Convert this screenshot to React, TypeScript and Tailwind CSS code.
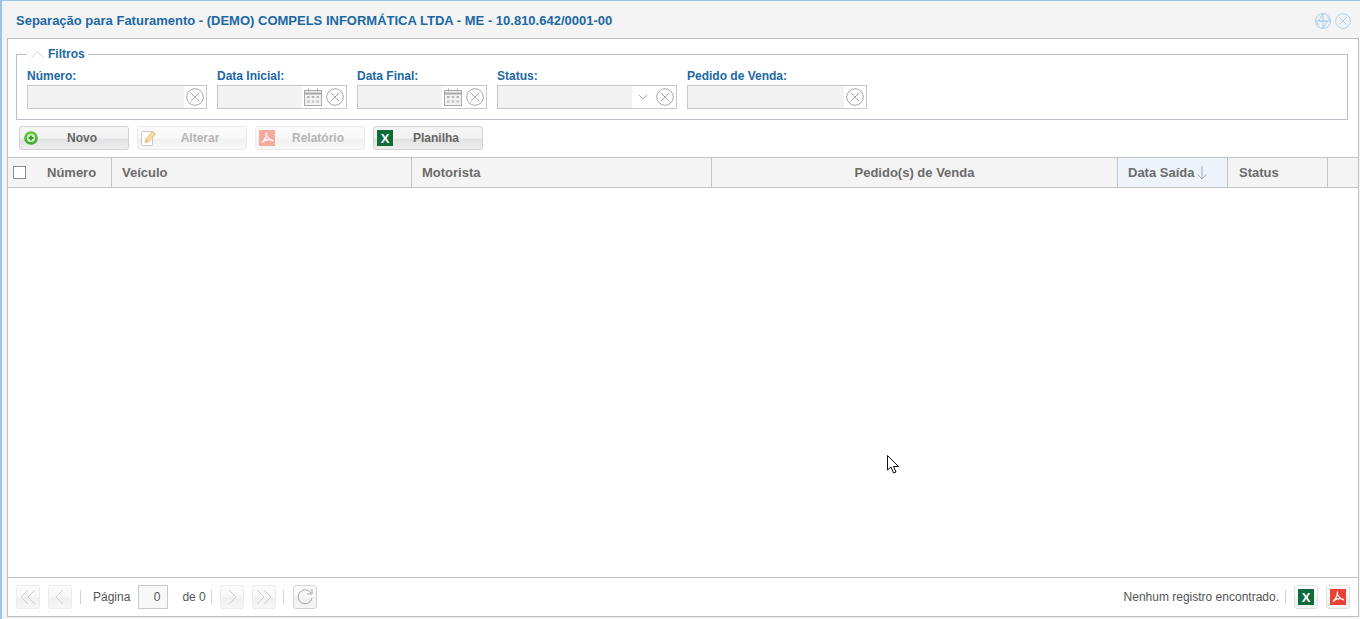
import type { ReactNode } from "react";

const font = "font-['Liberation_Sans',Arial,sans-serif]";

function ClearIcon({ className = "text-[#a9a9a9]" }: { className?: string }) {
  return (
    <svg width="18" height="18" viewBox="0 0 18 18" fill="none" stroke="currentColor" className={className}>
      <circle cx="9" cy="9" r="8.3" />
      <path d="M4.600 4.600l8.800 8.800M13.400 4.600l-8.800 8.800" />
    </svg>
  );
}

function CalendarIcon() {
  return (
    <svg width="18" height="18" viewBox="0 0 18 18" fill="none">
      <rect x="0.500" y="2.500" width="17" height="15" fill="#f2f2f2" stroke="#a9a9a9" />
      <path d="M0.500 5.500h17" stroke="#a9a9a9" strokeWidth="2" />
      <path d="M4.500 0.500v3M13.500 0.500v3" stroke="#a9a9a9" />
      <path d="M3 8.500h2.500M7.800 8.500h2.500M12.500 8.500h2.500M3 9.500h2.500M7.800 9.500h2.500M12.500 9.500h2.500M3 13h2.500M7.800 13h2.500M12.500 13h2.500M3 14h2.500M7.800 14h2.500M12.500 14h2.500" stroke="#b5b5b5" />
    </svg>
  );
}

function PlusBall() {
  return (
    <svg width="14" height="14" viewBox="0 0 14 14">
      <defs>
        <radialGradient id="ball" cx="50%" cy="35%" r="70%">
          <stop offset="0%" stopColor="#86e05a" />
          <stop offset="100%" stopColor="#2f9e1f" />
        </radialGradient>
      </defs>
      <circle cx="7" cy="7" r="6.800" fill="url(#ball)" />
      <circle cx="7" cy="7" r="4" fill="#d9f5cf" />
      <path d="M7 4.600v4.800M4.600 7h4.800" stroke="#2f9e1f" strokeWidth="1.800" />
    </svg>
  );
}

function PencilIcon() {
  return (
    <svg width="16" height="16" viewBox="0 0 16 16" fill="none">
      <rect x="0.500" y="1.500" width="11" height="14" rx="1" fill="#fff" stroke="#c9c9c9" />
      <path d="M4 12.500l1-3.500 6.500-7.500 3 2.500L8 11.500z" fill="#f6dfa5" stroke="#e3bf7c" />
      <path d="M4 12.500l1-3.500 3 2.500z" fill="#f3c48a" />
    </svg>
  );
}

function ExcelIcon() {
  return (
    <span className="flex h-[16px] w-[16px] items-center justify-center bg-[#0f6b3c] text-[13px] leading-none font-bold text-white">
      X
    </span>
  );
}

function PdfIcon({ faded }: { faded?: boolean }) {
  return (
    <svg width="16" height="16" viewBox="0 0 16 16" fill="none">
      <rect width="16" height="16" fill={faded ? "#f7a99e" : "#ea4335"} />
      <path d="M7.500 2.500c.2 3-.8 6.500-4.500 10M7 3.500c.5 3 2.500 6 7 7.500M3 12.500c2.500-3 6.500-3.500 11-2" stroke="#fff" strokeWidth="1.200" />
    </svg>
  );
}

function Field({ label, width, icons }: { label: string; width: string; icons: ReactNode }) {
  return (
    <div className={`flex flex-col ${width}`}>
      <label className="mb-[1px] h-[16px] text-[12px] leading-[16px] font-bold text-[#1c68a4]">{label}</label>
      <div className="flex h-[24px] border border-[#c8c8c8] bg-white">
        <div className="min-w-0 flex-1 bg-[#f3f3f3]" />
        <div className="flex items-center gap-[4px] pr-[2px] pl-[2px]">{icons}</div>
      </div>
    </div>
  );
}

function ToolButton({ icon, label, disabled }: { icon: ReactNode; label: string; disabled?: boolean }) {
  return (
    <button
      className={`flex h-[24px] w-[110px] items-center rounded-[3px] border pl-[3px] text-[12px] font-bold ${
        disabled
          ? "border-[#ececec] bg-[linear-gradient(#fbfbfb_0%,#f9f9f9_50%,#f1f1f1_55%,#f8f8f8_100%)] text-[#b5b5b5]"
          : "border-[#d2d2d2] bg-[linear-gradient(#f6f6f6_0%,#f2f2f2_50%,#e2e2e2_55%,#eeeeee_100%)] text-[#666666]"
      }`}
    >
      <span className="flex w-[16px] items-center justify-center">{icon}</span>
      <span className="flex-1 pr-[3px] text-center">{label}</span>
    </button>
  );
}

function Col({ className, children }: { className: string; children?: ReactNode }) {
  return (
    <div className={`flex h-full items-center border-r border-[#c4c4c4] text-[13px] font-bold text-[#6b6b6b] ${className}`}>{children}</div>
  );
}

function PagerButton({ d, active }: { d: string; active?: boolean }) {
  return (
    <button className={`flex h-[24px] w-[24px] items-center justify-center rounded-[3px] border bg-[linear-gradient(#fbfbfb_0%,#f8f8f8_50%,#f0f0f0_55%,#f6f6f6_100%)] ${active ? "border-[#d2d2d2]" : "border-[#ececec]"}`}>
      <svg width="18" height="18" viewBox="0 0 18 18" fill="none" stroke={active ? "#a3a3a3" : "#d0d0d0"}>
        <path d={d} />
      </svg>
    </button>
  );
}

function Separator() {
  return <span className="h-[14px] w-px bg-[#d4d4d4]" />;
}

function ExportButton({ children }: { children: ReactNode }) {
  return (
    <button className="flex h-[24px] w-[24px] items-center justify-center rounded-[3px] border border-[#e2e2e2] bg-[linear-gradient(#fbfbfb_0%,#f8f8f8_50%,#f0f0f0_55%,#f6f6f6_100%)]">
      {children}
    </button>
  );
}

export default function App() {
  return (
    <div className={`relative flex h-[619px] w-[1360px] flex-col overflow-hidden bg-[#f4f4f4] ${font}`}>
      <div className="flex h-full flex-col border-t border-l-2 border-[#9ac6ec]">
        <header className="flex h-[37px] shrink-0 items-center justify-between pr-[9px] pl-[14px]">
          <h1 className="mt-[2px] text-[13px] font-bold text-[#1c68a4]">
            Separação para Faturamento - (DEMO) COMPELS INFORMÁTICA LTDA - ME - 10.810.642/0001-00
          </h1>
          <div className="mt-[2px] flex items-center gap-[4px] text-[#a6cdec]">
            <svg width="16" height="16" viewBox="0 0 16 16" fill="none" stroke="currentColor">
              <circle cx="8" cy="8" r="7.500" />
              <path d="M8 0.500v7.500H3.500zM8 15.500V8h4.500zM8 8h7.500L12 3.500M8 8H0.500L4 12.500" />
            </svg>
            <ClearIcon className="h-[16px] w-[16px] text-[#a6cdec]" />
          </div>
        </header>

        <main className="mr-[1px] mb-[2px] ml-[5px] flex min-h-0 flex-1 flex-col border border-[#c0c0c0] bg-white">
          <div className="px-[8px] pt-[8px]">
            <fieldset className="h-[73px] w-[1332px] border border-[#b9bcc9] pr-[8px] pl-[10px]">
              <legend className="flex h-[14px] items-center gap-[4px] pr-[3px] pl-[4px] text-[12px] font-bold text-[#1c68a4]">
                <svg width="13" height="7" viewBox="0 0 13 7" fill="none" stroke="#d5d5d5">
                  <path d="M0.500 6.500l6-6 6 6" />
                </svg>
                Filtros
              </legend>
              <div className="mt-[7px] flex gap-[10px]">
                <Field label="Número:" width="w-[180px]" icons={<ClearIcon />} />
                <Field label="Data Inicial:" width="w-[130px]" icons={<><CalendarIcon /><ClearIcon /></>} />
                <Field label="Data Final:" width="w-[130px]" icons={<><CalendarIcon /><ClearIcon /></>} />
                <Field
                  label="Status:"
                  width="w-[180px]"
                  icons={
                    <>
                      <svg width="18" height="18" viewBox="0 0 18 18" fill="none" stroke="#a9a9a9">
                        <path d="M5 7l4 4 4-4" />
                      </svg>
                      <ClearIcon />
                    </>
                  }
                />
                <Field label="Pedido de Venda:" width="w-[180px]" icons={<ClearIcon />} />
              </div>
            </fieldset>
          </div>

          <div className="flex gap-[8px] pt-[6px] pl-[11px]">
            <ToolButton icon={<PlusBall />} label="Novo" />
            <ToolButton icon={<PencilIcon />} label="Alterar" disabled />
            <ToolButton icon={<PdfIcon faded />} label="Relatório" disabled />
            <ToolButton icon={<ExcelIcon />} label="Planilha" />
          </div>

          <div className="mt-[7px] flex h-[31px] shrink-0 items-center border-y border-[#c4c4c4] bg-[#f4f4f4]">
            <Col className="w-[104px] pl-[5px]">
              <span className="h-[13px] w-[13px] border border-[#8f8f8f] bg-white" />
              <span className="ml-[21px]">Número</span>
            </Col>
            <Col className="w-[300px] pl-[10px]">Veículo</Col>
            <Col className="w-[300px] pl-[10px]">Motorista</Col>
            <Col className="w-[406px] justify-center">Pedido(s) de Venda</Col>
            <Col className="w-[110px] bg-[#edf4fb] pl-[10px]">
              Data Saída
              <svg width="12" height="16" viewBox="0 0 12 16" fill="none" stroke="#a9a9a9" className="ml-[2px]">
                <path d="M6 1v13M1.500 9.500L6 14l4.500-4.500" />
              </svg>
            </Col>
            <Col className="w-[100px] pl-[11px]">Status</Col>
          </div>

          <div className="min-h-0 flex-1" />

          <footer className="flex h-[39px] shrink-0 items-center justify-between border-t border-[#c4c4c4] pr-[8px] pl-[8px] text-[12px] text-[#555555]">
            <div className="flex items-center">
              <PagerButton d="M9 2L2 9l7 7M16 2L9 9l7 7" />
              <span className="w-[8px]" />
              <PagerButton d="M12 2L5 9l7 7" />
              <span className="w-[8px]" />
              <Separator />
              <span className="ml-[12px]">Página</span>
              <span className="ml-[8px] flex h-[24px] w-[30px] items-center justify-end border border-[#c8c8c8] bg-[#f8f8f8] pr-[7px]">0</span>
              <span className="ml-[14px]">de 0</span>
              <span className="w-[5px]" />
              <Separator />
              <span className="w-[8px]" />
              <PagerButton d="M6 2l7 7-7 7" />
              <span className="w-[8px]" />
              <PagerButton d="M2 2l7 7-7 7M9 2l7 7-7 7" />
              <span className="w-[7px]" />
              <Separator />
              <span className="w-[9px]" />
              <PagerButton active d="M15 5a7 7 0 1 0 1 5M16 1v5h-5" />
            </div>
            <div className="flex items-center">
              <span>Nenhum registro encontrado.</span>
              <span className="w-[6px]" />
              <Separator />
              <span className="w-[8px]" />
              <ExportButton>
                <ExcelIcon />
              </ExportButton>
              <span className="w-[8px]" />
              <ExportButton>
                <PdfIcon />
              </ExportButton>
            </div>
          </footer>
        </main>
      </div>

      {/* mouse pointer caught in the screenshot */}
      <svg width="13" height="20" viewBox="0 0 13 20" className="absolute top-[455px] left-[887px]" fill="#fff" stroke="#111">
        <path d="M0.500 0.500v14.500l3.500-3 2.500 6 2.500-1-2.500-5.500h5z" />
      </svg>
    </div>
  );
}
